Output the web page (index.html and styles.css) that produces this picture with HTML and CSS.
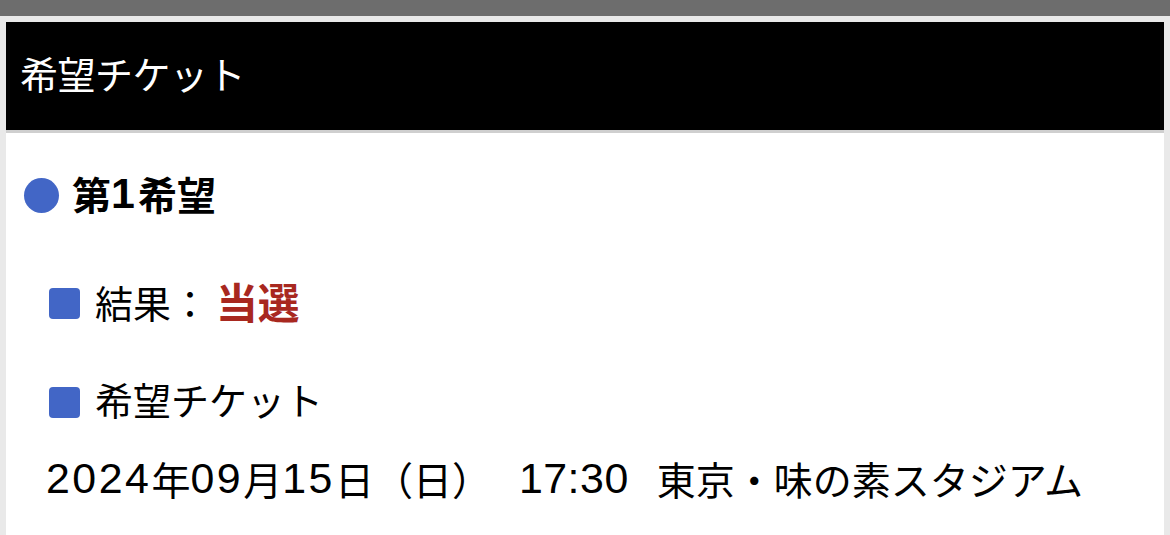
FILE: index.html
```html
<!DOCTYPE html>
<html lang="ja">
<head>
<meta charset="utf-8">
<title>希望チケット</title>
<link rel="stylesheet" href="styles.css">
</head>
<body>
<div class="topbar"></div>
<div class="page">
  <section class="card">
    <header class="card-head">希望チケット</header>
    <div class="card-body">
      <h2 class="choice"><span class="dot"></span>第<span class="n">1</span>希望</h2>
      <div class="item"><span class="sq"></span>結果：<strong class="win">当選</strong></div>
      <div class="item item-ticket"><span class="sq"></span>希望チケット</div>
      <p class="detail"><span class="n">2024</span>年<span class="n">09</span>月<span class="n">15</span>日（日）<span class="gap1"></span><span class="n time">17:30</span><span class="gap2"></span>東京・味の素スタジアム</p>
    </div>
  </section>
</div>
</body>
</html>
```

FILE: styles.css
```css
html, body {
  margin: 0;
  padding: 0;
}
body {
  background: #e9e9e9;
  font-family: "Noto Sans CJK JP", "Noto Sans", sans-serif;
  color: #000;
  height: 100vh;
  overflow: hidden;
}
.topbar {
  height: 16px;
  background: #6d6d6d;
}
.page {
  padding: 6px 6px 0;
}
.card {
  background: #fff;
  height: calc(100vh - 22px);
  overflow: hidden;
}
.card-head {
  background: #000;
  color: #fff;
  font-size: 38px;
  line-height: 102px;
  height: 108px;
  padding-left: 14px;
  border-bottom: 3px solid #cfcfcf;
  letter-spacing: -0.5px;
}
.card-body {
  padding: 40px 0 0 18px;
}
.choice {
  margin: 0;
  display: flex;
  align-items: center;
  font-size: 39px;
  font-weight: 700;
  line-height: 40px;
  height: 40px;
}
.choice .n {
  letter-spacing: 3px;
}
.dot {
  width: 35px;
  height: 35px;
  border-radius: 50%;
  background: #4266c6;
  margin: 5px 13px 0 0;
  flex: none;
}
.item {
  display: flex;
  align-items: center;
  font-size: 38px;
  line-height: 40px;
  height: 40px;
  margin-top: 69px;
  padding-left: 25px;
}
.item-ticket {
  margin-top: 57px;
}
.sq {
  width: 31px;
  height: 31px;
  border-radius: 4px;
  background: #4266c6;
  margin: 3px 15px 0 0;
  flex: none;
}
.item-ticket .sq {
  margin-top: 6px;
}
.win {
  color: #a8281f;
  font-weight: 700;
  font-size: 1.1em;
  line-height: 1;
  margin-left: 7px;
}
.detail {
  margin: 39px 0 0 22px;
  font-size: 39px;
  line-height: 40px;
  height: 40px;
  white-space: nowrap;
  display: flex;
  align-items: center;
}
.n {
  font-family: "Liberation Sans", sans-serif;
  font-size: 1.1em;
  letter-spacing: 2.5px;
}
.n.time {
  letter-spacing: 0.5px;
}
.gap1 {
  display: inline-block;
  width: 28px;
}
.gap2 {
  display: inline-block;
  width: 28px;
}
```
